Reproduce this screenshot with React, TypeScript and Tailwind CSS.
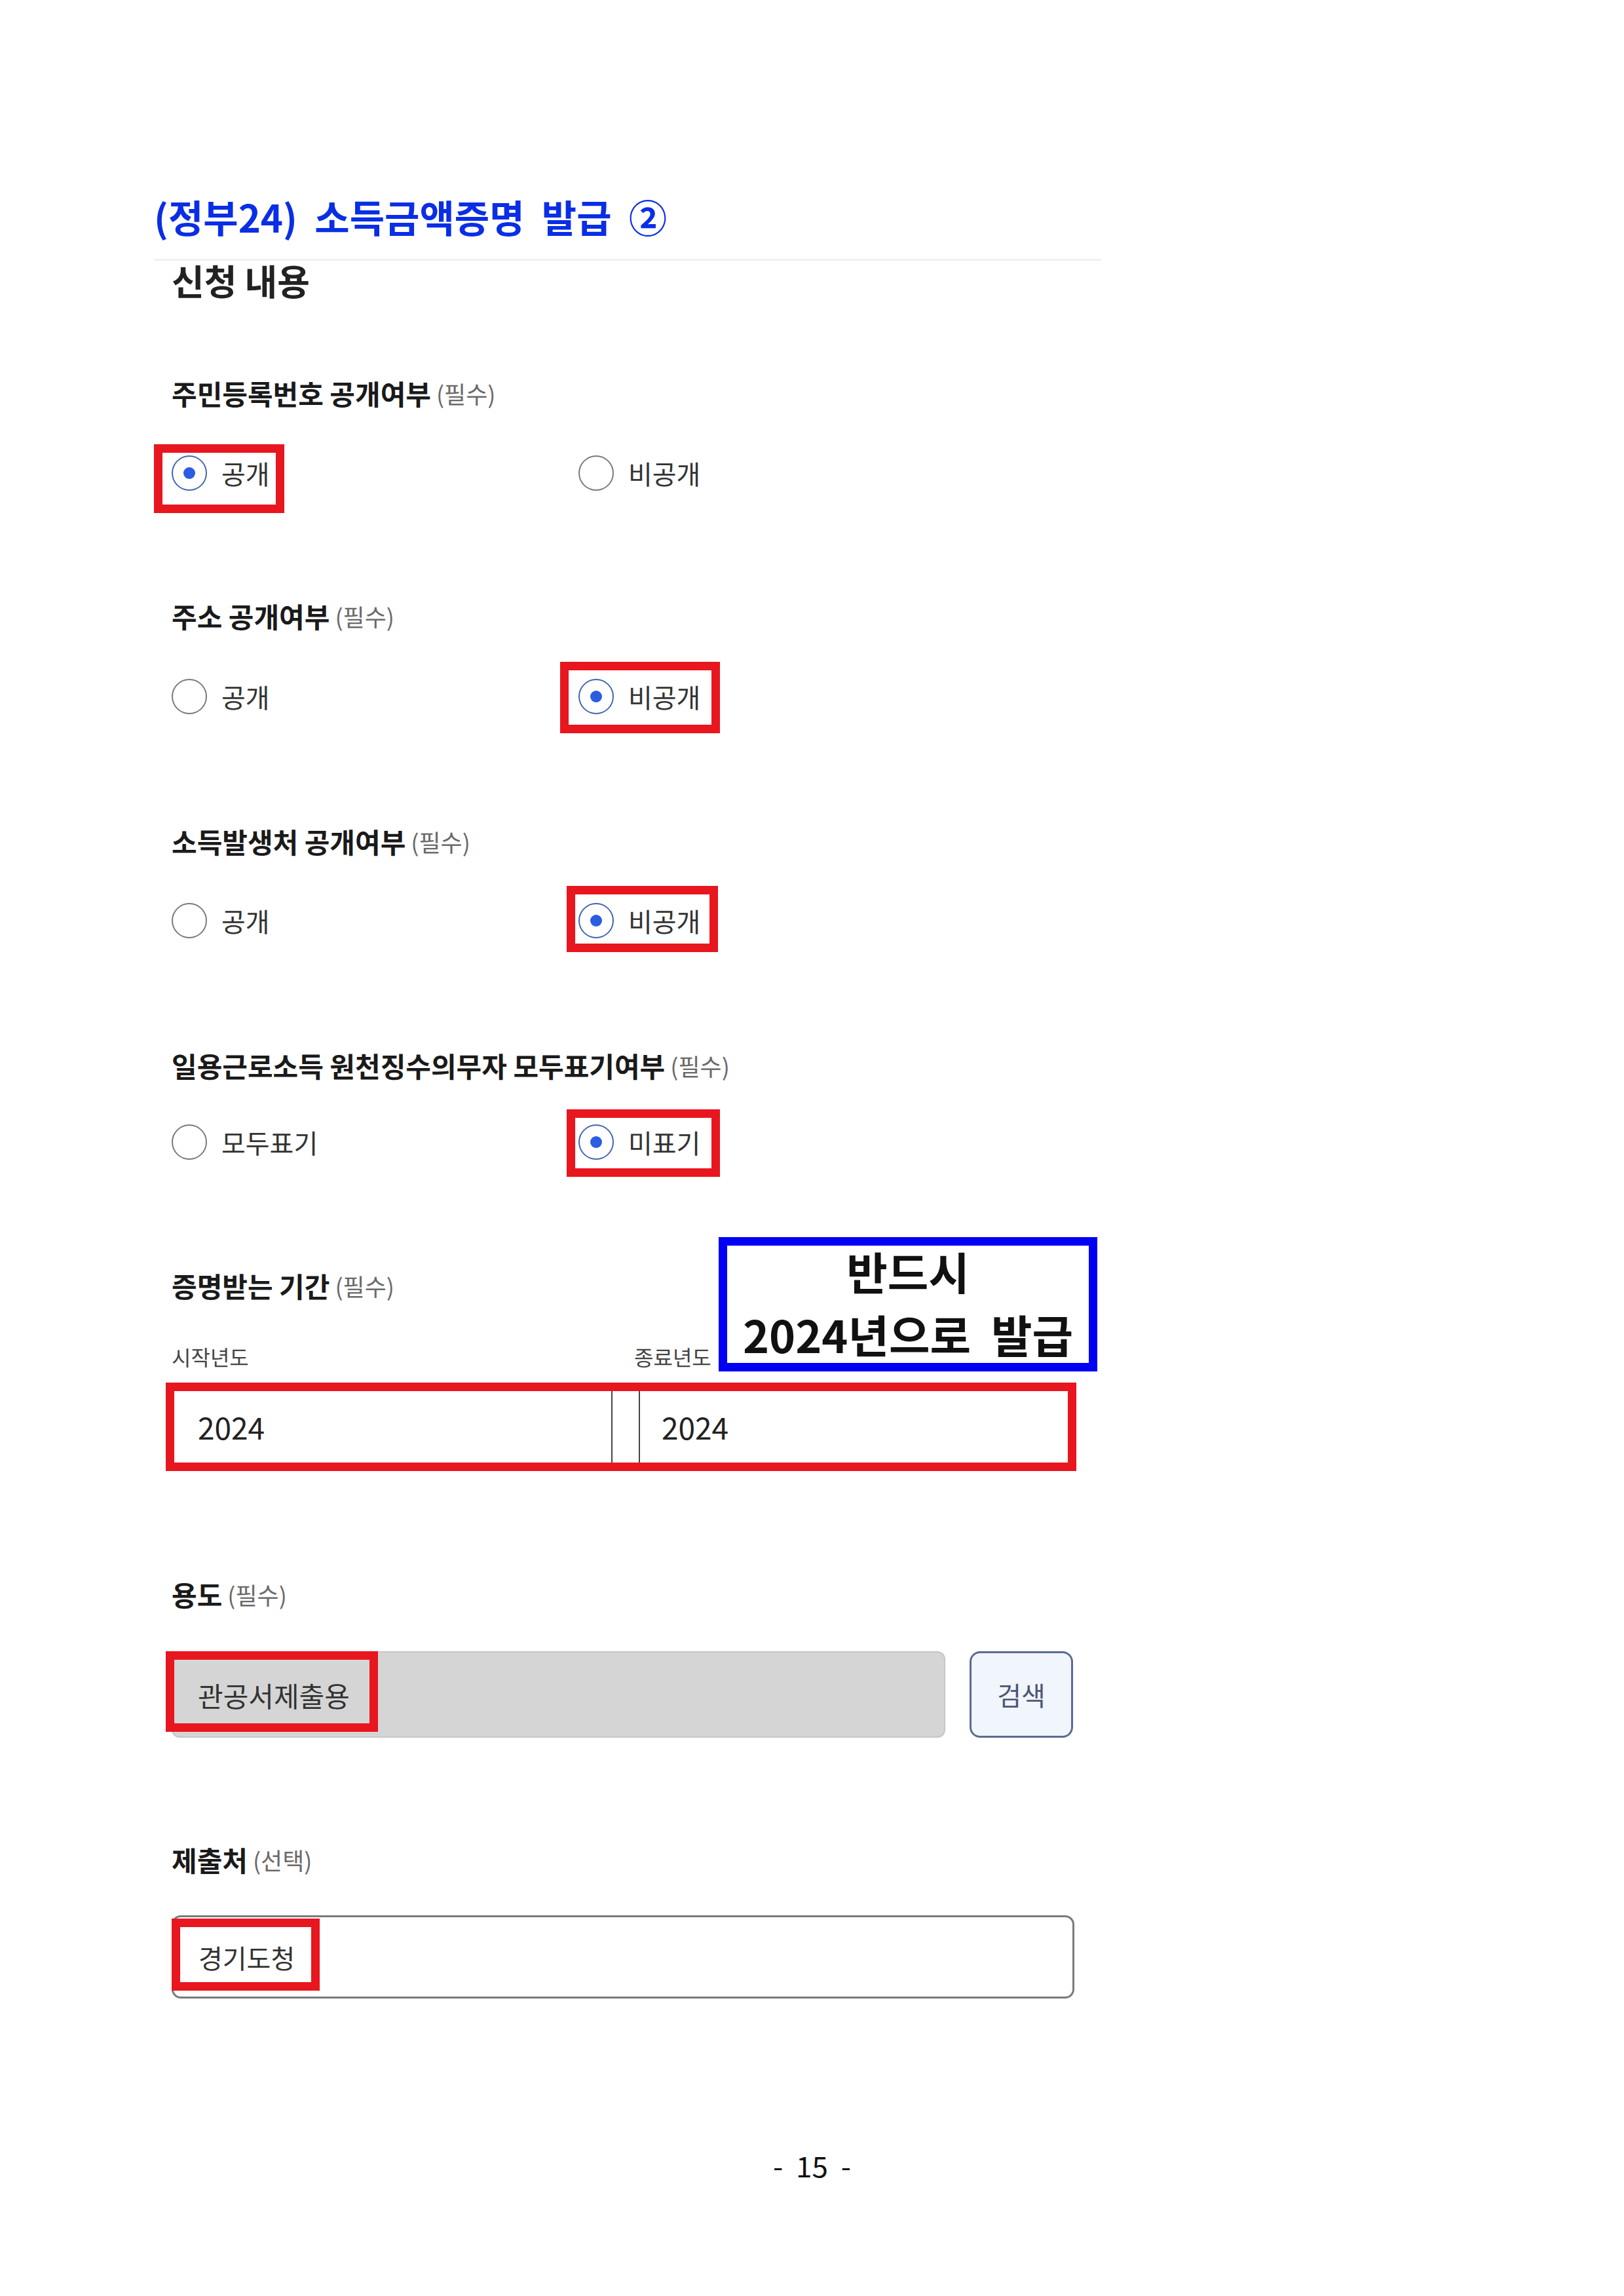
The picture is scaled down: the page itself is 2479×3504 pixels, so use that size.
import React from "react";

const red = "border-[13px] border-[#e8161e]";

function RedMark({ className }: { className: string }) {
  return <div className={`absolute pointer-events-none ${red} ${className}`} />;
}

function Label({ title, note }: { title: string; note: string }) {
  return (
    <div className="h-[50px] flex items-center">
      <span className="text-[42px] font-bold text-[#1a1a1a] leading-none">
        {title}
      </span>
      <span className="ml-[8px] text-[36px] text-[#6a6a6a] leading-none">
        ({note})
      </span>
    </div>
  );
}

function Radio({
  label,
  checked,
  mark,
}: {
  label: string;
  checked?: boolean;
  mark?: string;
}) {
  return (
    <div className="relative flex items-center gap-[22px]">
      {checked ? (
        <span className="w-[54px] h-[54px] rounded-full border-[2px] border-[#4466b0] flex items-center justify-center">
          <span className="w-[18px] h-[18px] rounded-full bg-[#2a5de0]" />
        </span>
      ) : (
        <span className="w-[54px] h-[54px] rounded-full border-[2px] border-[#7a7a7a]" />
      )}
      <span className="text-[40px] text-[#333] leading-none">{label}</span>
      {mark && <RedMark className={mark} />}
    </div>
  );
}

function RadioRow({
  first,
  second,
  className,
}: {
  first: React.ReactNode;
  second: React.ReactNode;
  className: string;
}) {
  return (
    <div className={`h-[60px] flex items-center ${className}`}>
      <div className="w-[621px] flex">{first}</div>
      {second}
    </div>
  );
}

export default function App() {
  return (
    <div className="w-[2479px] h-[3504px] bg-white flex flex-col font-['Noto_Sans_CJK_KR','Noto_Sans',sans-serif]">
      <h1 className="ml-[235px] mt-[294px] text-[58px] leading-[72px] font-bold text-[#0a2ee6] whitespace-pre">
        (정부24)  소득금액증명  발급  ②
      </h1>

      <div className="ml-[235px] mt-[29px] w-[1446px] border-t-[3px] border-[#f1f1f1] pl-[27px] flex flex-col">
        <h2 className="text-[54px] leading-[60px] font-bold text-[#222]">
          신청 내용
        </h2>

        <div className="mt-[117px]">
          <Label title="주민등록번호 공개여부" note="필수" />
        </div>
        <RadioRow
          className="mt-[67px]"
          first={
            <Radio
              label="공개"
              checked
              mark="left-[-27px] top-[-17px] w-[199px] h-[105px]"
            />
          }
          second={<Radio label="비공개" />}
        />

        <div className="mt-[163px]">
          <Label title="주소 공개여부" note="필수" />
        </div>
        <RadioRow
          className="mt-[68px]"
          first={<Radio label="공개" />}
          second={
            <Radio
              label="비공개"
              checked
              mark="left-[-28px] top-[-26px] w-[244px] h-[109px]"
            />
          }
        />

        <div className="mt-[166px]">
          <Label title="소득발생처 공개여부" note="필수" />
        </div>
        <RadioRow
          className="mt-[66px]"
          first={<Radio label="공개" />}
          second={
            <Radio
              label="비공개"
              checked
              mark="left-[-18px] top-[-26px] w-[231px] h-[101px]"
            />
          }
        />

        <div className="mt-[166px]">
          <Label title="일용근로소득 원천징수의무자 모두표기여부" note="필수" />
        </div>
        <RadioRow
          className="mt-[62px]"
          first={<Radio label="모두표기" />}
          second={
            <Radio
              label="미표기"
              checked
              mark="left-[-18px] top-[-23px] w-[234px] h-[103px]"
            />
          }
        />

        {/* 증명받는 기간 */}
        <div className="relative mt-[164px] flex flex-col">
          <Label title="증명받는 기간" note="필수" />
          <div className="mt-[63px] h-[40px] flex items-center text-[32px] text-[#444] leading-none">
            <span className="w-[706px]">시작년도</span>
            <span>종료년도</span>
          </div>
          <div className={`mt-[20px] ml-[-9px] w-[1390px] h-[135px] flex ${red}`}>
            <div className="w-[669px] border-r-[2px] border-[#444] flex items-center pl-[36px] text-[46px] text-[#222]">
              2024
            </div>
            <div className="ml-[40px] flex-1 border-l-[2px] border-[#444] flex items-center pl-[33px] text-[46px] text-[#222]">
              2024
            </div>
          </div>

          <div className="absolute left-[835px] top-[-49px] w-[578px] h-[205px] border-[13px] border-[#0000f5] bg-white flex flex-col items-center">
            <span className="mt-[-9px] text-[68px] leading-[96px] font-bold text-[#111]">
              반드시
            </span>
            <span className="text-[68px] leading-[96px] font-bold text-[#111] whitespace-pre">
              2024년으로  발급
            </span>
          </div>
        </div>

        {/* 용도 */}
        <div className="mt-[163px]">
          <Label title="용도" note="필수" />
        </div>
        <div className="mt-[62px] flex">
          <div className="relative w-[1181px] h-[132px] bg-[#d5d5d5] border-[2px] border-[#c6c6c6] rounded-[12px] flex items-center pl-[38px] text-[42px] text-[#333]">
            관공서제출용
            <RedMark className="left-[-11px] top-[-2px] w-[324px] h-[123px]" />
          </div>
          <button className="ml-[37px] w-[158px] h-[132px] border-[3px] border-[#5b6b95] rounded-[16px] bg-[#f1f5fc] text-[40px] text-[#4b5677]">
            검색
          </button>
        </div>

        {/* 제출처 */}
        <div className="mt-[161px]">
          <Label title="제출처" note="선택" />
        </div>
        <div className="relative mt-[60px] w-[1378px] h-[127px] border-[3px] border-[#7a7a7a] rounded-[14px] bg-white flex items-center pl-[38px] text-[40px] text-[#333]">
          경기도청
          <RedMark className="left-[-3px] top-[2px] w-[226px] h-[110px]" />
        </div>
      </div>

      <p className="mt-[229px] text-center text-[44px] leading-[50px] text-[#111] whitespace-pre">
        -  15  -
      </p>
    </div>
  );
}
